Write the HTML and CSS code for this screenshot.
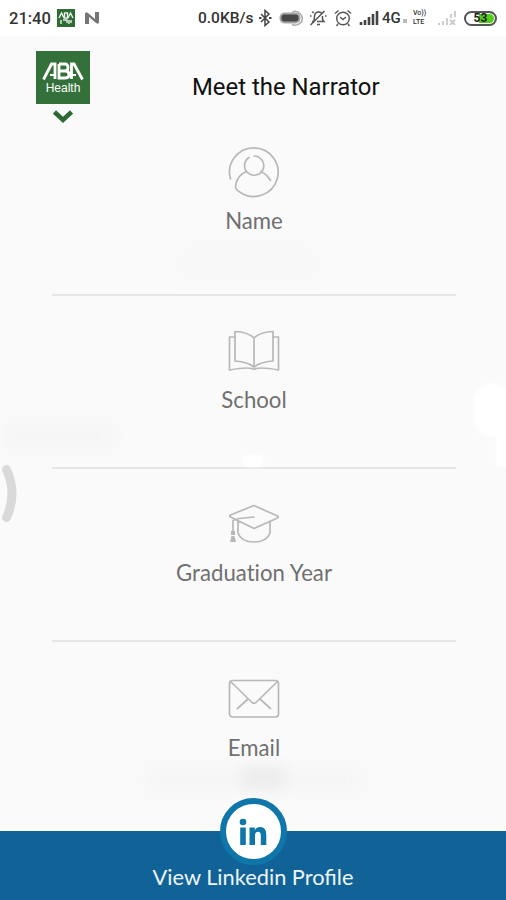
FILE: index.html
```html
<!DOCTYPE html>
<html lang="en">

<head>
    <meta charset="UTF-8">
    <meta name="viewport" content="width=device-width, initial-scale=1.0">
    <title>Meet the Narrator</title>
    <link rel="stylesheet" href="styles.css">
</head>

<body>
    <div class="status-bar">
        <span class="time">21:40</span>
        <svg class="app-icon" width="18" height="18" viewBox="0 0 18 18">
            <rect width="18" height="18" fill="#2f6b35" />
            <path d="M2 9 4.500 4 7 9M7.500 4v5h3V4zM11 9l2.500-5L16 9M4 11v4M6 11h4v3M12 11v4M14 11v3" fill="none" stroke="#e8f0e8" stroke-width="1.400" />
        </svg>
        <svg class="n-icon" width="16" height="14" viewBox="0 0 16 14">
            <path d="M1 13V3q0-3 3-1l7 6V1h4v10q0 3-3 1L5 6v7z" fill="#757575" />
        </svg>
        <span class="speed">0.0KB/s</span>
        <svg class="bluetooth" width="14" height="18" viewBox="0 0 14 18">
            <path d="M3 5l8 8-4 3.500V1.500L11 5l-8 8" fill="none" stroke="#444" stroke-width="1.500" />
            <path d="M1 9h2.500M11 9h2.500" stroke="#444" stroke-width="2" />
        </svg>
        <svg class="headset" width="25" height="18" viewBox="0 0 25 18">
            <path d="M13 3.500q4-3 8 1t1 9q-4 4-9 2" fill="none" stroke="#aaa" stroke-width="1.500" />
            <rect x="1.500" y="4.500" width="19" height="9" rx="4" fill="#484848" stroke="#a5a5a5" stroke-width="2" />
        </svg>
        <svg class="mute" width="18" height="18" viewBox="0 0 18 18">
            <path d="M3 12.500h2L5.500 7Q6 3 9.500 3q2 0 3 1M13.500 7v3.500l1.500 2H8M8 15.500h3M1.500 16 15.500 2M16 7h1.500M1 7h1.500M3.500 2.500 4.500 4" fill="none" stroke="#555" stroke-width="1.500" />
        </svg>
        <svg class="alarm" width="18" height="18" viewBox="0 0 18 18">
            <circle cx="9" cy="9.500" r="6.300" fill="none" stroke="#555" stroke-width="1.400" />
            <path d="M1 4.500 4.500 1.500M17 4.500l-3.500-3M6 8l3 2.500L12 8M4 15l-1.500 2M14 15l1.500 2" fill="none" stroke="#555" stroke-width="1.400" />
        </svg>
        <svg class="signal" width="20" height="14" viewBox="0 0 20 14">
            <path d="M2 14v-3M6 14V9M10 14V6M14 14V3M18 14V0" stroke="#444" stroke-width="2.600" />
        </svg>
        <span class="network">4G</span>
        <span class="dot"></span>
        <div class="volte">
            <span>Vo))</span>
            <span>LTE</span>
        </div>
        <svg class="signal-off" width="20" height="14" viewBox="0 0 20 14">
            <path d="M2 14v-2M6 14v-4M10 14V7M14 7V3M18 6V0M13 9l5 5M18 9l-5 5" fill="none" stroke="#c9c9c9" stroke-width="1.800" />
        </svg>
        <span class="battery">53</span>
    </div>

    <header>
        <div class="brand">
            <div class="logo">
                <svg width="42" height="20" viewBox="0 0 42 20">
                    <path d="M1.500 18.500 9.500 3H13V18M17 3V17h6.500q3.500 0 3.500-3.500T23.500 10H17h6q3 0 3-3.500T23 3H17M29.500 18V3h2.500L40.500 18.500" fill="none" stroke="#fff" stroke-width="2.800" />
                    <path d="M8 14h4M30 14h4" stroke="#fff" stroke-width="2" />
                </svg>
                <span>Health</span>
            </div>
            <svg class="chevron" width="20" height="14" viewBox="0 0 20 14">
                <path d="M1.500 2 10 10 18.500 2" fill="none" stroke="#2d6a33" stroke-width="4.500" />
            </svg>
        </div>
        <h1>Meet the Narrator</h1>
    </header>

    <main>
        <section class="field name">
            <svg width="54" height="54" viewBox="0 0 54 54">
                <path d="M3.500 34A24.300 24.300 0 1 1 13.500 47.500Q8.500 45 8.500 41 10 30 19.500 26.500" />
                <path d="M22 12.500a9.600 9.600 0 1 0 5-1.500M34 26.500q6 3 9.500 9" />
            </svg>
            <h2>Name</h2>
        </section>
        <section class="field school">
            <svg width="54" height="54" viewBox="0 0 54 54">
                <path d="M27 14Q21 8 8 7.500V37q13 1 19 6 6-5 19-6V7.500Q33 8 27 14V43" />
                <path d="M8 13H2.500v33q16-3 22.500-1.500 2 1.500 4 0 6.500-1.500 22.500 1.500V13H46" />
            </svg>
            <h2>School</h2>
        </section>
        <section class="field graduation">
            <svg width="54" height="54" viewBox="0 0 54 54">
                <path d="M27 8.500 3.500 18q-1.800 1 0 2L27 31.500 50.500 21q1.800-1 0-2zM27 20 12 21.500 6 23.500V34M11 24.500V36q3 9 16 9t16-9V24.500" />
                <path class="tassel" d="M4 34h4v4H4zM4.500 39h3L9 45H3z" />
            </svg>
            <h2>Graduation Year</h2>
        </section>
        <section class="field email">
            <svg width="54" height="54" viewBox="0 0 54 54">
                <rect x="2.500" y="8.500" width="49" height="36.500" rx="3" />
                <path d="M4 10 24.500 30Q27 32.500 29.500 30L50 10M21 27 10.500 36.500M33 27 43.500 36.500" />
            </svg>
            <h2>Email</h2>
        </section>
    </main>

    <footer>
        <div class="linkedin">
            <svg width="28" height="28" viewBox="0 0 28 28">
                <circle cx="4" cy="4" r="3.300" />
                <path d="M1.200 9.500h5.600V27H1.200zM10.500 9.500h5.300v2.400q1.800-2.900 5.500-2.900 6 0 6 7.500V27h-5.500v-9.500q0-3.700-2.700-3.700-3.100 0-3.100 3.900V27h-5.500z" />
            </svg>
        </div>
        <a>View Linkedin Profile</a>
    </footer>

    <!-- soft patches over the private values -->
    <div class="patch patch-name"></div>
    <div class="patch patch-school"></div>
    <div class="patch patch-edge"></div>
    <div class="patch patch-edge-low"></div>
    <div class="patch patch-line"></div>
    <div class="patch patch-email"></div>
    <div class="patch patch-email-dark"></div>
    <svg class="side-handle" width="20" height="60" viewBox="0 0 20 60">
        <path d="M6.500 5.500q11 24 0 48" fill="none" stroke="#d9d9d9" stroke-width="9" stroke-linecap="round" />
    </svg>
</body>

</html>
```

FILE: styles.css
```css
body {
    font-family: Lato, "Liberation Sans", sans-serif;
    margin: 0;
    padding: 0;
    height: 900px;
    display: flex;
    flex-direction: column;
    position: relative;
    overflow: hidden;
    background-color: #fafafa;
    color: #707070;
}

svg {
    display: block;
    flex: none;
}

.status-bar {
    display: flex;
    align-items: center;
    box-sizing: border-box;
    height: 36px;
    padding-left: 9px;
    background: white;
    color: #333;
    font-family: Roboto, sans-serif;
    font-weight: 500;
    white-space: nowrap;
}

.time {
    width: 48px;
    font-size: 16.5px;
}

.n-icon {
    margin-left: 9px;
}

.speed {
    margin-left: 98px;
    width: 60px;
    font-size: 15.5px;
}

.headset {
    margin-left: 7px;
}

.mute {
    margin-left: 5px;
}

.alarm {
    margin-left: 7px;
}

.signal {
    margin-left: 7px;
}

.network {
    margin-left: 3px;
    width: 20px;
    font-size: 15px;
}

.dot {
    width: 4px;
    height: 4px;
    margin: 6px 6px 0 1px;
    background: #bbb;
}

.volte {
    display: flex;
    flex-direction: column;
    width: 17px;
    font-size: 7px;
    line-height: 9px;
}

.signal-off {
    margin-left: 7px;
}

.battery {
    box-sizing: border-box;
    width: 33px;
    height: 15px;
    margin-left: 7px;
    border: 2px solid #555;
    border-radius: 8px;
    background: linear-gradient(to right, white 45%, #55cc18 45%);
    box-shadow: inset 0 0 0 1px white;
    color: #222;
    font-size: 12px;
    font-weight: 700;
    line-height: 11px;
    text-align: center;
}

header {
    display: flex;
    align-items: flex-start;
    box-sizing: border-box;
    height: 87px;
    padding: 15px 36px 0;
}

.brand {
    width: 54px;
}

.logo {
    display: flex;
    flex-direction: column;
    align-items: center;
    box-sizing: border-box;
    height: 53px;
    padding-top: 10px;
    background: #34703a;
    color: white;
    font: 12px/14px "Liberation Sans", sans-serif;
}

.chevron {
    margin: 6px 0 0 17px;
}

h1 {
    margin: 21px 0 0 102px;
    color: #111;
    font: 400 23.9px/30px Roboto, sans-serif;
    white-space: nowrap;
}

main {
    display: flex;
    flex-direction: column;
    height: 708px;
    padding: 0 50px 0 52px;
}

.field {
    display: flex;
    flex-direction: column;
    align-items: center;
    gap: 7px;
    box-sizing: border-box;
    height: 173px;
    padding-top: 28px;
    border-bottom: 2px solid #e6e6e6;
}

.name {
    padding-top: 22px;
}

.email {
    padding-top: 30px;
    border-bottom: none;
}

.field svg {
    fill: none;
    stroke: #b8b8b8;
    stroke-width: 1.7;
    stroke-linejoin: round;
    stroke-linecap: round;
}

.field .tassel {
    fill: #b8b8b8;
    stroke: none;
}

h2 {
    margin: 0;
    font-size: 22.2px;
    font-weight: 400;
    line-height: 29px;
    font-variant-ligatures: none;
}

footer {
    display: flex;
    flex-direction: column;
    align-items: center;
    height: 69px;
    background: #116397;
    color: #edf5fb;
    font-size: 21.8px;
    line-height: 28px;
}

.linkedin {
    display: flex;
    justify-content: center;
    align-items: center;
    flex: none;
    box-sizing: border-box;
    width: 67px;
    height: 67px;
    margin-top: -33px;
    border: 6px solid #0f76a9;
    border-radius: 50%;
    background: white;
    fill: #0f76a9;
    z-index: 1;
}

footer a {
    margin-top: -2px;
}

.patch {
    position: absolute;
    filter: blur(6px);
}

.patch-name {
    left: 180px;
    top: 242px;
    width: 136px;
    height: 40px;
    background: #f9f8f8;
}

.patch-school {
    left: 4px;
    top: 424px;
    width: 110px;
    height: 24px;
    background: #f6f6f6;
}

.patch-edge {
    left: 474px;
    top: 384px;
    width: 36px;
    height: 52px;
    border-radius: 16px;
    background: white;
    filter: blur(2px);
}

.patch-edge-low {
    left: 496px;
    top: 420px;
    width: 12px;
    height: 47px;
    background: white;
    filter: blur(1px);
}

.patch-line {
    left: 242px;
    top: 455px;
    width: 22px;
    height: 12px;
    border-radius: 6px;
    background: white;
    filter: blur(1px);
}

.patch-email {
    left: 146px;
    top: 768px;
    width: 214px;
    height: 24px;
    background: #f6f6f6;
}

.patch-email-dark {
    left: 242px;
    top: 766px;
    width: 42px;
    height: 24px;
    background: #ededed;
}

.side-handle {
    position: absolute;
    left: 0;
    top: 464px;
}
```
